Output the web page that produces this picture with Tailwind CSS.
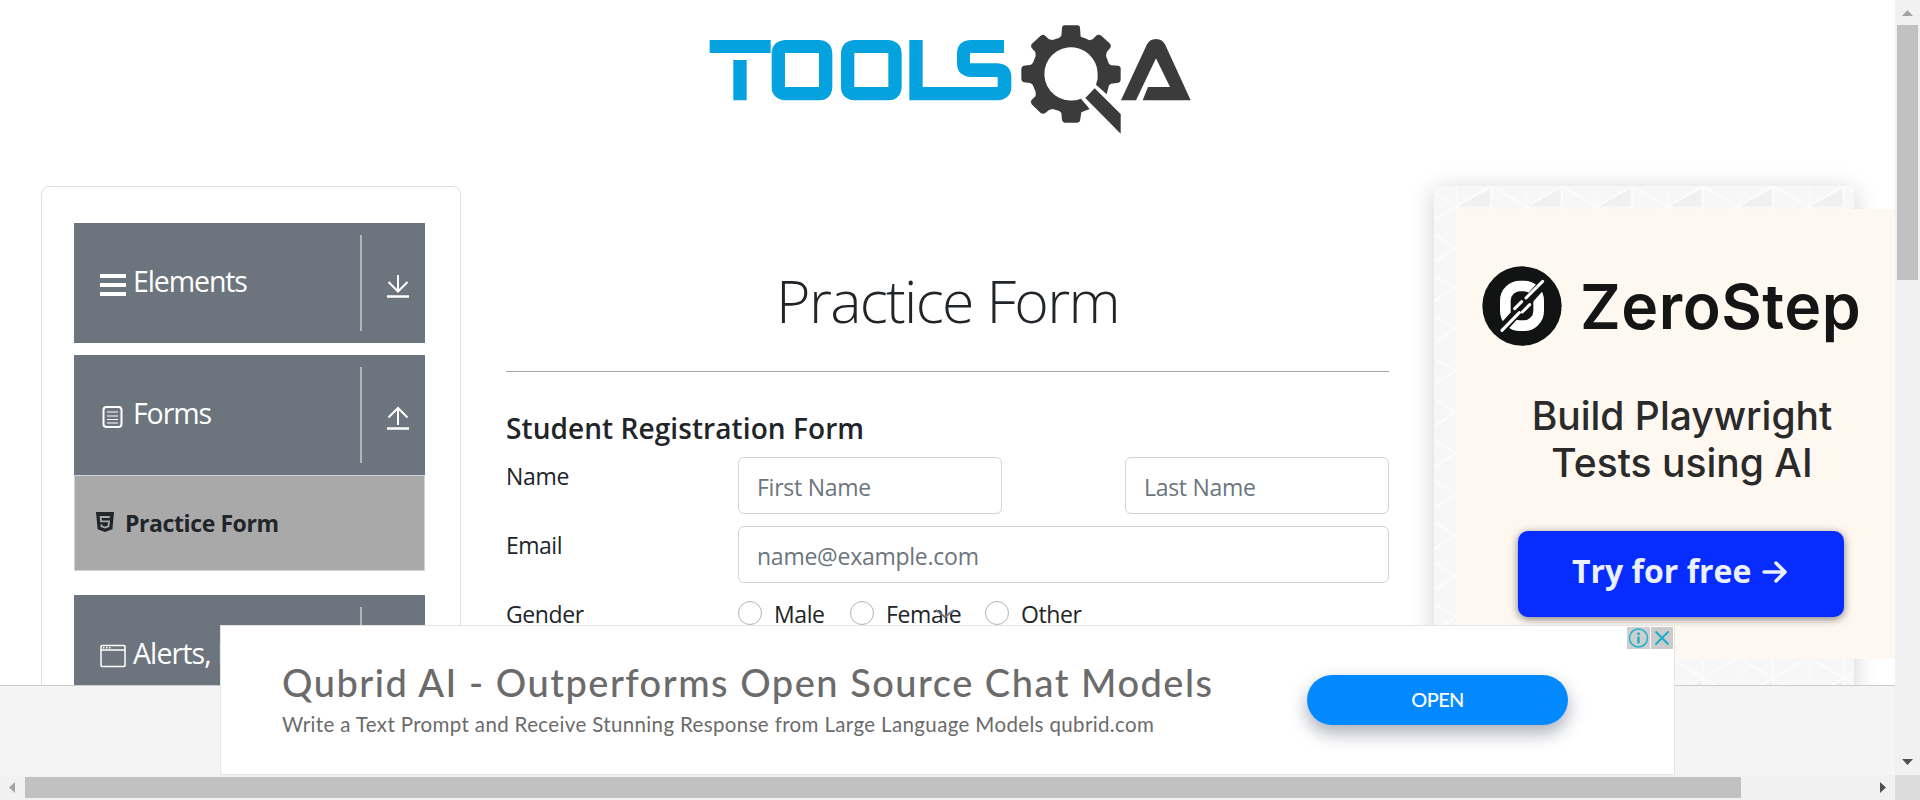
<!DOCTYPE html>
<html lang="en">
<head>
<meta charset="utf-8">
<title>ToolsQA - Practice Form</title>
<script src="https://cdn.jsdelivr.net/npm/@tailwindcss/browser@4"></script>
</head>
<body class="w-[1920px] h-[800px] overflow-hidden bg-white text-[#212529] font-['Open_Sans','Noto_Sans',sans-serif]">
<div class="grid grid-cols-[1895px_25px] grid-rows-[775px_25px] h-[800px] overflow-hidden">

  <div class="relative overflow-hidden flex flex-col">
    <header class="h-[186px] shrink-0 pt-[10px] pl-[690px]">
      <svg class="block" width="520" height="140" viewBox="0 0 1560 420">
        <g fill="#04a2df">
          <path d="M59 90H242V129H59zM130 150H170V271H130z"/>
          <path fill-rule="evenodd" d="M286 90H388L402 92Q427 102 427 131V230Q427 259 402 269L388 271H286Q245 267 245 230V131Q245 94 286 90zM285 129V231H387V129z"/>
          <path fill-rule="evenodd" d="M493 90H595L609 92Q635 102 635 131V230Q635 259 609 269L595 271H493Q453 267 453 230V131Q453 94 493 90zM493 129V231H595V129z"/>
          <path d="M658 90H698V231H923V201H840Q801 197 801 160V131Q801 94 840 90H942V129H840V160H923Q964 164 964 201V230Q964 267 923 271H658z"/>
        </g>
        <g fill="#3b3b3b">
          <path fill-rule="evenodd" d="M1122 46H1164Q1170 47 1170 54L1172 80Q1186 83 1198 91L1208 88L1221 75Q1228 72 1234 77L1261 102Q1264 108 1261 113L1250 127L1248 138L1257 162L1264 166L1286 167Q1292 169 1292 175V209Q1292 215 1286 218L1263 221L1257 226L1250 253L1218 224Q1225 208 1223 192A80 80 0 1 0 1173 266L1199 297L1174 307L1170 333Q1167 338 1160 338H1124Q1117 337 1116 330L1114 309L1108 303L1088 297L1077 300L1065 310Q1058 313 1052 309L1025 283Q1021 277 1024 271L1037 258L1037 246L1028 224L1021 219L1001 217Q994 214 994 207V176Q995 169 1001 167L1023 164L1029 158L1037 138L1036 126L1025 114Q1021 108 1025 102L1052 77Q1058 72 1064 76L1077 88L1088 90L1108 83L1114 77L1116 54Q1117 47 1122 46z"/>
          <path d="M1214 235L1292 312V371L1186 264z"/>
          <path d="M1293 271L1370 105Q1378 87 1398 87T1426 105L1502 271H1358L1374 231H1440L1398 145L1338 271z"/>
        </g>
      </svg>
    </header>

    <main class="h-[499px] shrink-0 [clip-path:inset(-40px_0_0_0)] flex items-start">
      <nav class="ml-[41px] w-[420px] h-[620px] shrink-0 border border-[#dfdfdf] rounded-lg pt-9 pl-8 flex flex-col items-start">
        <div class="w-[351px] h-[120px] bg-[#6c757d] text-white flex items-center">
          <svg class="ml-[26px] mt-[3px] shrink-0" width="26" height="24" viewBox="0 0 26 24"><path d="M0 1h26v4H0zM0 10h26v4H0zM0 19h26v4H0z" fill="#fff"/></svg>
          <span class="ml-[7px] mb-1 w-[227px] text-[28.5px] tracking-[-1.1px] leading-10 whitespace-nowrap">Elements</span>
          <span class="w-[2px] h-24 bg-[#b5b5b5]"></span>
          <svg class="ml-[24px] mt-[6px]" width="24" height="24" viewBox="0 0 24 24" fill="none" stroke="#fff" stroke-width="2"><path d="M12 1v17M2.500 8l9.500 9.500L21.500 8"/><path d="M1 22.500h22" stroke-width="2.500"/></svg>
        </div>
        <div class="mt-3 w-[351px] h-[120px] bg-[#6c757d] text-white flex items-center">
          <svg class="ml-[25px] mt-[3px] shrink-0" width="26" height="24" viewBox="0 0 26 24" fill="none" stroke="#fff"><rect x="4.500" y="2" width="18" height="20" rx="3" stroke-width="2"/><path d="M8 7h11M8 11h11M8 14.500h11M8 18h11" stroke-width="1.200"/></svg>
          <span class="ml-2 mb-1 w-[227px] text-[28.5px] tracking-[-1.1px] leading-10 whitespace-nowrap">Forms</span>
          <span class="w-[2px] h-24 bg-[#b5b5b5]"></span>
          <svg class="ml-[24px] mt-[6px]" width="24" height="24" viewBox="0 0 24 24" fill="none" stroke="#fff" stroke-width="2"><path d="M12 19V2M2.500 11.500L12 2l9.500 9.500"/><path d="M1 22.500h22" stroke-width="2.500"/></svg>
        </div>
        <div class="w-[351px] h-24 bg-[#a9a9a9] border border-[#ced4da] flex items-center">
          <svg class="ml-[21px] mb-[3px] shrink-0" width="18" height="20" viewBox="0 0 18 20"><path d="M0 0h18l-1.600 17.300L9 20l-7.400-2.700z" fill="#212529"/><path d="M13.800 5H4.600l.4 4.300h8l-.5 5L9 15.600l-3.500-1.200-.2-2" fill="none" stroke="#a9a9a9" stroke-width="1.800"/></svg>
          <span class="ml-[11px] text-[23px] font-bold tracking-[-0.4px] whitespace-nowrap">Practice Form</span>
        </div>
        <div class="mt-6 w-[351px] h-[120px] bg-[#6c757d] text-white flex items-center">
          <svg class="ml-[25.5px] mt-[2px] shrink-0" width="26" height="24" viewBox="0 0 26 24" fill="none" stroke="#fff" stroke-width="1.500"><rect x="1" y="1.500" width="24" height="21" rx="1"/><path d="M1 6h24M3 3.700h1.500M6 3.700h1.500M9 3.700h1.500"/></svg>
          <span class="ml-[7.5px] mb-1 w-[227px] text-[28.5px] tracking-[-0.9px] leading-10 whitespace-nowrap">Alerts, Frame</span>
          <span class="w-[2px] h-24 bg-[#b5b5b5]"></span>
        </div>
      </nav>

      <section class="ml-[45px] w-[883px] shrink-0 flex flex-col">
        <h1 class="mt-[64px] h-[100px] leading-[100px] text-center text-[59px] font-light tracking-[-1.7px]">Practice Form</h1>
        <hr class="mt-[21px] border-0 h-px bg-[#a6a7a8]">
        <h5 class="mt-[35px] h-[42px] leading-[42px] text-[28px] font-semibold tracking-[0.08px]">Student Registration Form</h5>
        <div class="mt-[8px] flex">
          <label class="w-[232px] h-10 leading-[38px] text-[23px] tracking-[-0.3px]">Name</label>
          <input class="w-[264px] h-[57px] border border-[#ced4da] rounded-md pl-[18px] pt-[3px] text-[23px] tracking-[-0.25px] placeholder:text-[#6c757d]" placeholder="First Name">
          <input class="ml-[123px] w-[264px] h-[57px] border border-[#ced4da] rounded-md pl-[18px] pt-[3px] text-[23px] tracking-[-0.3px] placeholder:text-[#6c757d]" placeholder="Last Name">
        </div>
        <div class="mt-3 flex">
          <label class="w-[232px] h-10 leading-[38px] text-[23px] tracking-[-0.5px]">Email</label>
          <input class="w-[651px] h-[57px] border border-[#ced4da] rounded-md pl-[18px] pt-[3px] text-[23px] tracking-[-0.25px] placeholder:text-[#6c757d]" placeholder="name@example.com">
        </div>
        <div class="mt-3 flex text-[23px] tracking-[-0.4px] leading-[38px]">
          <span class="w-[232px]">Gender</span>
          <label class="w-[112px] flex"><i class="mt-[6px] mr-[12px] size-6 rounded-full border border-[#adb5bd]"></i>Male</label>
          <label class="relative w-[135px] flex"><i class="mt-[6px] mr-[12px] size-6 rounded-full border border-[#adb5bd]"></i>Female
            <svg class="absolute left-[85px] top-[14px]" width="20" height="10" viewBox="0 0 20 10" fill="none" stroke="#77777c" stroke-width="2"><path d="M1 1l9 7 9-7"/></svg>
          </label>
          <label class="flex"><i class="mt-[6px] mr-[12px] size-6 rounded-full border border-[#adb5bd]"></i>Other</label>
        </div>
      </section>

      <aside class="relative ml-[45px] w-[420px] h-[620px] shrink-0 bg-[#f7f7f7] shadow-[0_4px_24px_rgba(0,0,0,0.18)]">
        <svg class="absolute inset-0" width="420" height="620">
          <defs>
            <pattern id="tri" width="70.500" height="41" patternUnits="userSpaceOnUse" x="22" y="0">
              <path d="M2 20L34 3v17z" fill="#f0f0f0"/>
              <path d="M0 20.500L35.200 0 70.500 20.500 35.200 41zM0 0v41M35.200 0v41" fill="none" stroke="#fdfdfd" stroke-width="1.500"/>
            </pattern>
          </defs>
          <rect x="22" width="398" height="620" fill="url(#tri)"/>
          <path d="M0 7l22 13L0 33M0 48l22 15L0 75M0 90l22 11L0 115M0 130l22 12L0 157M0 173l22 12L0 198M0 213l22 13L0 240M0 254l22 13L0 281M0 295l22 13L0 322M0 336l22 13L0 363M0 377l22 13L0 404M0 418l22 13L0 445" fill="none" stroke="#fdfdfd" stroke-width="1.500"/>
        </svg>
        <div class="relative ml-[23px] mt-[23px] w-[450px] h-[450px] bg-[#fef8f1] text-[#151515] font-['Inter',sans-serif] flex flex-col">
          <div class="pt-[56px] pl-[25px] flex items-center">
            <svg width="80" height="82" viewBox="0 0 240 246">
              <circle cx="120" cy="123" r="119" fill="#121414"/>
              <rect x="70" y="63" width="100" height="119" rx="44" fill="none" stroke="#fff" stroke-width="32"/>
              <path d="M51 202L192 46" stroke="#121414" stroke-width="28"/>
              <path d="M60 196L112 143M132 99L182 49M98 131L119 110M121 141L143 119" stroke="#fff" stroke-width="9" stroke-linecap="round"/>
            </svg>
            <span class="ml-[18px] leading-[82px] text-[62.5px] font-semibold tracking-[0.5px]">ZeroStep</span>
          </div>
          <p class="mt-[45px] w-[450px] text-center text-[39px] leading-[47px] font-medium text-[#2b2a2a]">Build Playwright<br>Tests using AI</p>
          <div class="ml-[61px] mt-[45px] w-[326px] h-[86px] rounded-[10px] bg-[#062cff] shadow-[0_2px_8px_rgba(0,0,0,0.5)] text-[#eaf0ff] font-['Open_Sans',sans-serif] flex items-center">
            <span class="ml-[54px] mb-[6px] text-[32px] font-bold whitespace-nowrap">Try for free</span>
            <svg class="ml-[11px] mb-[4px]" width="25" height="24" viewBox="0 0 25 24" fill="none" stroke="#eaf0ff" stroke-width="3.500" stroke-linecap="round" stroke-linejoin="round"><path d="M2 12h20M14 3l9 9-9 9"/></svg>
          </div>
        </div>
      </aside>
    </main>

    <footer class="flex-1 bg-[#f4f4f4] border-t border-[#ccc]"></footer>

    <div class="absolute left-[220px] top-[625px] w-[1455px] h-[150px] bg-white border border-[#e4e5e7] flex">
      <div class="ml-[61px] pt-[26px] w-[1025px] text-[#6b6b6b] font-['Lato',sans-serif] whitespace-nowrap">
        <p class="text-[38px] leading-[60px] font-medium tracking-[1.5px]">Qubrid AI - Outperforms Open Source Chat Models</p>
        <p class="text-[20.5px] leading-6 tracking-[0.36px]">Write a Text Prompt and Receive Stunning Response from Large Language Models qubrid.com</p>
      </div>
      <div class="mt-[49px] w-[261px] h-[50px] rounded-full bg-[#0389ff] shadow-[0_8px_18px_rgba(40,50,80,0.4)] text-white text-[20px] leading-[48px] text-center font-medium tracking-[-0.6px] font-['Lato',sans-serif]">OPEN</div>
      <div class="absolute right-[1px] top-[1px] flex gap-px">
        <span class="w-[23px] h-[22px] bg-[#cfcfcf]"><svg width="23" height="22" viewBox="0 0 23 22" fill="none" stroke="#1fb3cd"><circle cx="11.500" cy="11" r="9" stroke-width="1.500"/><path d="M11.500 9.500v7M11.500 5.500v2.500" stroke-width="2.500"/></svg></span>
        <span class="w-[22px] h-[22px] bg-[#cbcbcb]"><svg width="22" height="22" viewBox="0 0 22 22" fill="none" stroke="#12aecb" stroke-width="1.800"><path d="M4.500 4.500l13 13M17.500 4.500l-13 13"/></svg></span>
      </div>
    </div>
  </div>

  <div class="bg-[#f1f1f1] flex flex-col items-center">
    <svg width="25" height="25"><path d="M12.500 10l5.500 6H7z" fill="#a3a3a3"/></svg>
    <div class="w-[21px] h-[255px] bg-[#c1c1c1]"></div>
    <svg class="mt-auto" width="25" height="25"><path d="M7 9h11l-5.500 6z" fill="#505050"/></svg>
  </div>
  <div class="bg-[#f1f1f1] flex items-center">
    <svg width="25" height="25"><path d="M9 12.500l6-5.500v11z" fill="#a3a3a3"/></svg>
    <div class="w-[1716px] h-[21px] bg-[#c1c1c1]"></div>
    <svg class="ml-auto" width="25" height="25"><path d="M10 7v11l6-5.500z" fill="#505050"/></svg>
  </div>
  <div class="bg-[#dcdcdc]"></div>
</div>
</body>
</html>
